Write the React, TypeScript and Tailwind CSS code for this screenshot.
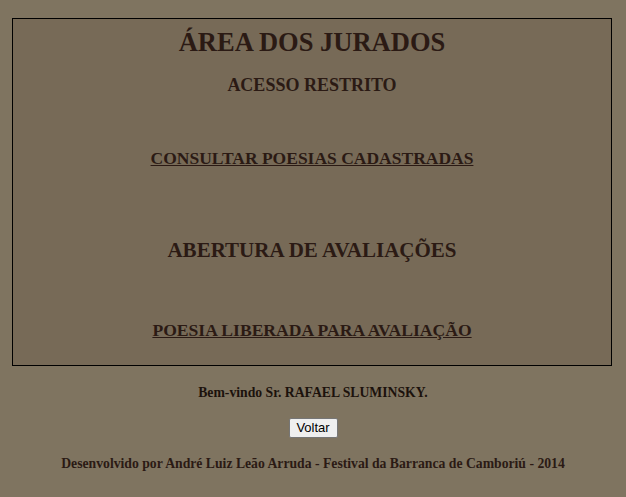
import React from 'react';

const serif = "font-['Liberation_Serif','Times_New_Roman',serif]";

const App: React.FC = () => {
  return (
    <div className={`min-h-[497px] w-full bg-[#7f7460] pt-[18px] ${serif}`}>
      <div className="ml-[12px] w-[600px] h-[348px] border border-black bg-[#776a57] text-[#2b1a14] text-center font-bold">
        <h1 className="mt-[8px] h-[30px] text-[26.5px] leading-[30px]">ÁREA DOS JURADOS</h1>
        <h2 className="mt-[17px] h-[22px] text-[18px] leading-[22px]">ACESSO RESTRITO</h2>
        <p className="mt-[51px] h-[22px] text-[17.5px] leading-[22px]">
          <a href="#" className="underline">CONSULTAR POESIAS CADASTRADAS</a>
        </p>
        <h2 className="mt-[69px] h-[24px] text-[21px] leading-[24px]">ABERTURA DE AVALIAÇÕES</h2>
        <p className="mt-[57px] h-[22px] text-[17.6px] leading-[22px]">
          <a href="#" className="underline">POESIA LIBERADA PARA AVALIAÇÃO</a>
        </p>
      </div>
      <div className="text-center font-bold text-[13.7px]">
        <p className="mt-[19px] leading-[16px] text-[#1c120c]">Bem-vindo Sr. RAFAEL SLUMINSKY.</p>
        <div className="mt-[17px] flex justify-center">
          <button className="h-[20px] w-[49px] rounded-[2px] border border-[#767676] bg-[#efefef] text-[13px] font-normal leading-[18px] text-black font-['Liberation_Sans',Arial,sans-serif]">
            Voltar
          </button>
        </div>
        <p className="mt-[18px] leading-[16px] text-[#2b1a14]">
          Desenvolvido por André Luiz Leão Arruda - Festival da Barranca de Camboriú - 2014
        </p>
      </div>
    </div>
  );
};

export default App;
